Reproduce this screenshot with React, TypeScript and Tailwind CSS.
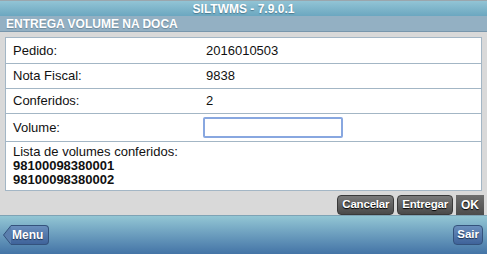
import React from 'react';

const rows = [
  { label: 'Pedido:', value: '2016010503', h: 'h-[26px]' },
  { label: 'Nota Fiscal:', value: '9838', h: 'h-[25px]' },
  { label: 'Conferidos:', value: '2', h: 'h-[25px]' },
];

const volumes = ['98100098380001', '98100098380002'];

const ActionButton = ({ label }: { label: string }) => (
  <button className="h-[20px] px-[4px] rounded-[4px] border border-[#3a3a3a] bg-gradient-to-b from-[#7a7a7a] to-[#4a4a4a] text-white text-[11.5px] font-bold leading-none tracking-[-0.2px] [text-shadow:0_1px_1px_#000]">
    {label}
  </button>
);

const App = () => {
  const [volume, setVolume] = React.useState('');

  return (
    <div className="w-[487px] h-[254px] flex flex-col bg-[#d9d9d9] font-['Liberation_Sans',Arial,sans-serif] overflow-hidden">
      {/* Title */}
      <div className="h-[16px] flex items-center justify-center border-t border-[#9aa6ad] bg-gradient-to-b from-[#92c4d5] to-[#6ba7c0] text-white text-[12px] font-bold [text-shadow:0_1px_1px_#4d7a8f]">
        SILTWMS - 7.9.0.1
      </div>
      <div className="h-[16px] flex items-center pl-[6px] bg-[#93b0c3] border-b border-[#7896ac] text-white text-[12px] font-bold [text-shadow:0_1px_1px_#6b8799]">
        ENTREGA VOLUME NA DOCA
      </div>

      {/* Content */}
      <div className="flex-1 flex flex-col px-[5px] pt-[5px]">
        <div className="w-[477px] bg-white border border-[#a3b6c5] text-[13px] text-[#111]">
          {rows.map((r) => (
            <div key={r.label} className={`${r.h} flex items-center border-b border-[#a3b6c5]`}>
              <span className="w-[200px] pl-[7px]">{r.label}</span>
              <span>{r.value}</span>
            </div>
          ))}
          <div className="h-[28px] flex items-center border-b border-[#a3b6c5]">
            <span className="w-[197px] pl-[7px]">Volume:</span>
            <input
              value={volume}
              onChange={(e) => setVolume(e.target.value)}
              className="w-[140px] h-[21px] rounded-[2px] border-2 border-[#88a7e0] outline-none px-1 text-[13px]"
            />
          </div>
          <div className="h-[48px] pl-[7px] pt-[3px] leading-[14px]">
            <div>Lista de volumes conferidos:</div>
            {volumes.map((v) => (
              <div key={v} className="font-bold">{v}</div>
            ))}
          </div>
        </div>
        <div className="flex justify-end gap-[3px] mt-[4px] -mr-[2px]">
          <ActionButton label="Cancelar" />
          <ActionButton label="Entregar" />
          <button className="h-[20px] w-[28px] bg-gradient-to-b from-[#6e6e6e] to-[#4c4c4c] text-white text-[12px] font-bold leading-none [text-shadow:0_1px_1px_#000]">
            OK
          </button>
        </div>
      </div>

      {/* Footer */}
      <div className="h-[39px] flex items-center justify-between pl-[3px] pr-[4px] border-t border-[#7ea3b5] bg-gradient-to-b from-[#93c6d4] to-[#4474a6]">
        <div className="flex items-center">
          <svg width="9" height="20" viewBox="0 0 9 20" className="-mr-px">
            <path d="M9 0.5 L8 0.5 L0.5 10 L8 19.5 L9 19.5 Z" fill="#5b7fae" stroke="#34527c" strokeWidth="1" />
          </svg>
          <div className="h-[20px] pr-[5px] pl-[1px] flex items-center rounded-r-[4px] border border-l-0 border-[#34527c] bg-gradient-to-b from-[#6a8fbd] to-[#3f639a] text-white text-[12px] font-bold [text-shadow:0_1px_1px_#1e3050]">
            Menu
          </div>
        </div>
        <button className="h-[20px] px-[3px] rounded-[4px] border border-[#34527c] bg-gradient-to-b from-[#6a8fbd] to-[#3f639a] text-white text-[11.5px] font-bold leading-none [text-shadow:0_1px_1px_#1e3050]">
          Sair
        </button>
      </div>
    </div>
  );
};

export default App;
